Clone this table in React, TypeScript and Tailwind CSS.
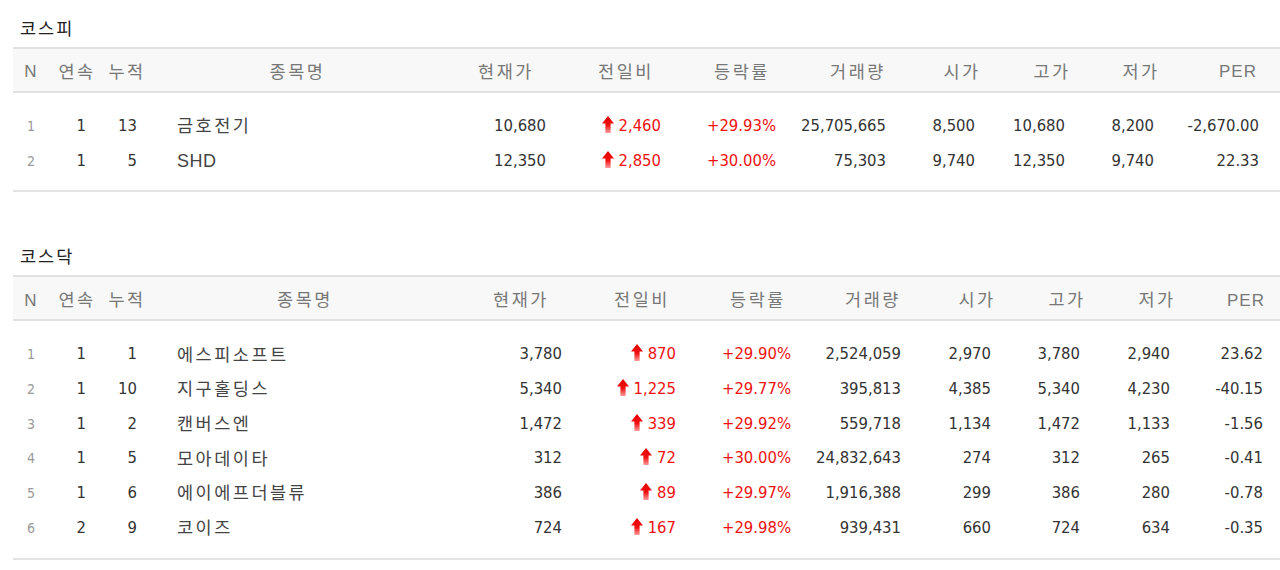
import React from "react";

type Row = {
  n: number;
  a: string;
  b: string;
  name: string;
  price: string;
  diff: string;
  rate: string;
  vol: string;
  open: string;
  high: string;
  low: string;
  per: string;
};

const kospi: Row[] = [
  { n: 1, a: "1", b: "13", name: "금호전기", price: "10,680", diff: "2,460", rate: "+29.93%", vol: "25,705,665", open: "8,500", high: "10,680", low: "8,200", per: "-2,670.00" },
  { n: 2, a: "1", b: "5", name: "SHD", price: "12,350", diff: "2,850", rate: "+30.00%", vol: "75,303", open: "9,740", high: "12,350", low: "9,740", per: "22.33" },
];

const kosdaq: Row[] = [
  { n: 1, a: "1", b: "1", name: "에스피소프트", price: "3,780", diff: "870", rate: "+29.90%", vol: "2,524,059", open: "2,970", high: "3,780", low: "2,940", per: "23.62" },
  { n: 2, a: "1", b: "10", name: "지구홀딩스", price: "5,340", diff: "1,225", rate: "+29.77%", vol: "395,813", open: "4,385", high: "5,340", low: "4,230", per: "-40.15" },
  { n: 3, a: "1", b: "2", name: "캔버스엔", price: "1,472", diff: "339", rate: "+29.92%", vol: "559,718", open: "1,134", high: "1,472", low: "1,133", per: "-1.56" },
  { n: 4, a: "1", b: "5", name: "모아데이타", price: "312", diff: "72", rate: "+30.00%", vol: "24,832,643", open: "274", high: "312", low: "265", per: "-0.41" },
  { n: 5, a: "1", b: "6", name: "에이에프더블류", price: "386", diff: "89", rate: "+29.97%", vol: "1,916,388", open: "299", high: "386", low: "280", per: "-0.78" },
  { n: 6, a: "2", b: "9", name: "코이즈", price: "724", diff: "167", rate: "+29.98%", vol: "939,431", open: "660", high: "724", low: "634", per: "-0.35" },
];

const headers = ["N", "연속", "누적", "종목명", "현재가", "전일비", "등락률", "거래량", "시가", "고가", "저가", "PER"];

const KO = "font-['Liberation_Sans','Noto_Sans_CJK_KR',sans-serif]";
const NUM = "font-['DejaVu_Sans_Condensed','Liberation_Sans','Noto_Sans_CJK_KR',sans-serif]";

function Arrow({ id }: { id: string }) {
  return (
    <svg width="12" height="17" viewBox="0 0 12 17" className="shrink-0 mb-[4px]">
      <defs>
        <linearGradient id={id} x1="0" y1="0" x2="0" y2="1">
          <stop offset="0" stopColor="#e60000" />
          <stop offset="0.55" stopColor="#f01010" />
          <stop offset="1" stopColor="#ff9a9a" />
        </linearGradient>
      </defs>
      <polygon points="6,0 12,7.5 8.6,7.5 8.6,17 3.4,17 3.4,7.5 0,7.5" fill={`url(#${id})`} />
    </svg>
  );
}

type Layout = {
  grid: string;
  pad: string[];
};

const layout1: Layout = {
  grid: "grid-cols-[36px_56px_44px_297px_120px_120px_112px_120px_88px_92px_86px_108px]",
  pad: ["", "pr-[19px]", "pr-[12px]", "pl-[28px]", "pr-[20px]", "pr-[25px]", "pr-[22px]", "pr-[32px]", "pr-[31px]", "pr-[33px]", "pr-[30px]", "pr-[33px]"],
};

const layout2: Layout = {
  grid: "grid-cols-[36px_56px_44px_312px_120px_122px_110px_120px_88px_92px_88px_90px]",
  pad: ["", "pr-[19px]", "pr-[12px]", "pl-[28px]", "pr-[19px]", "pr-[27px]", "pr-[22px]", "pr-[32px]", "pr-[30px]", "pr-[33px]", "pr-[31px]", "pr-[28px]"],
};

function Section({ title, rows, lay, gid }: { title: string; rows: Row[]; lay: Layout; gid: string }) {
  return (
    <div className="pt-[17px]">
      <div className={`${KO} pl-[20px] text-[17.5px] leading-[24px] tracking-[2px] text-[#222]`}>{title}</div>
      <div className="mt-[6px] ml-[13px] w-[1280px]">
        <div className={`grid ${lay.grid} h-[46px] items-center border-y-2 border-[#e2e2e2] bg-[#f8f8f8] pt-[4px] text-[#777]`}>
          {headers.map((h, i) => (
            <div
              key={h}
              className={`text-center ${KO} ${i === 0 || i === 11 ? "text-[17px] tracking-[1px]" : "text-[17.5px] tracking-[2.5px]"}`}
            >
              {h}
            </div>
          ))}
        </div>
        <div className="pt-[16px] pb-[12px] border-b-2 border-[#e4e4e4]">
          {rows.map((r, ri) => {
            const latin = /^[A-Za-z0-9 ]+$/.test(r.name);
            return (
              <div key={r.n} className={`grid ${lay.grid} h-[34.7px] items-center text-[#333] ${NUM} text-[16.5px]`}>
                <div className="text-center text-[14px] text-[#999]">{r.n}</div>
                <div className={`text-right ${lay.pad[1]}`}>{r.a}</div>
                <div className={`text-right ${lay.pad[2]}`}>{r.b}</div>
                <div
                  className={`${lay.pad[3]} ${KO} text-[#444] ${latin ? "text-[18px] tracking-[0.5px]" : "text-[17.5px] tracking-[2.5px]"}`}
                >
                  {r.name}
                </div>
                <div className={`text-right ${lay.pad[4]}`}>{r.price}</div>
                <div className={`flex items-center justify-end gap-[5px] text-[#ee1111] ${lay.pad[5]}`}>
                  <Arrow id={`${gid}-${ri}`} />
                  <span>{r.diff}</span>
                </div>
                <div className={`text-right text-[#ee1111] ${lay.pad[6]}`}>{r.rate}</div>
                <div className={`text-right ${lay.pad[7]}`}>{r.vol}</div>
                <div className={`text-right ${lay.pad[8]}`}>{r.open}</div>
                <div className={`text-right ${lay.pad[9]}`}>{r.high}</div>
                <div className={`text-right ${lay.pad[10]}`}>{r.low}</div>
                <div className={`text-right ${lay.pad[11]}`}>{r.per}</div>
              </div>
            );
          })}
        </div>
      </div>
    </div>
  );
}

export default function App() {
  return (
    <div className="w-[1280px] h-[570px] overflow-hidden bg-white">
      <Section title="코스피" rows={kospi} lay={layout1} gid="a1" />
      <div className="h-[36px]" />
      <Section title="코스닥" rows={kosdaq} lay={layout2} gid="a2" />
    </div>
  );
}
